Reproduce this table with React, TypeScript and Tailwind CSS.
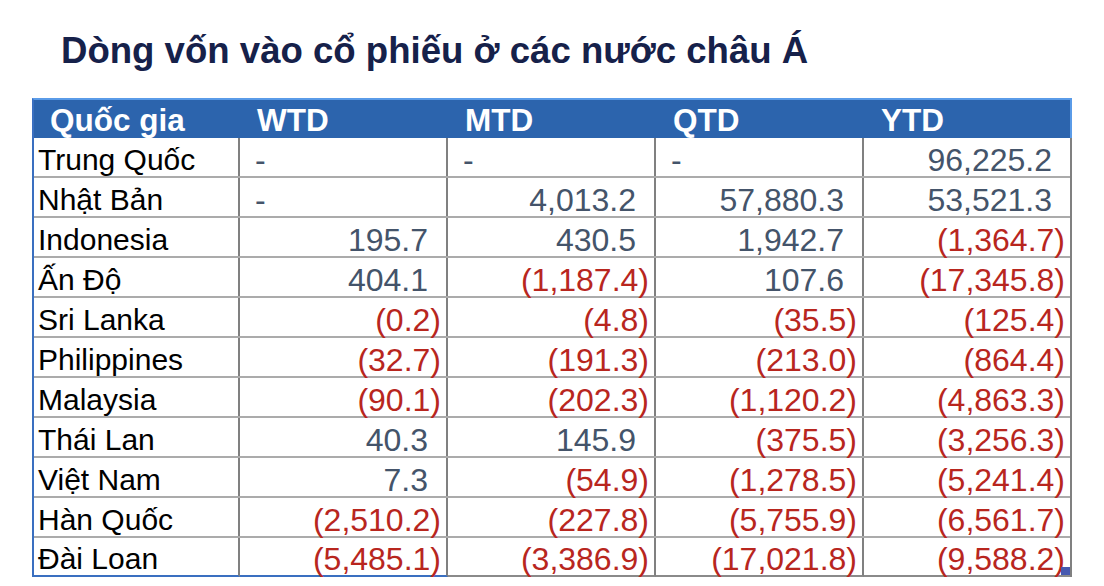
import React from "react";

type Row = { name: string; vals: (number | null)[] };

const rows: Row[] = [
  { name: "Trung Quốc", vals: [null, null, null, 96225.2] },
  { name: "Nhật Bản", vals: [null, 4013.2, 57880.3, 53521.3] },
  { name: "Indonesia", vals: [195.7, 430.5, 1942.7, -1364.7] },
  { name: "Ấn Độ", vals: [404.1, -1187.4, 107.6, -17345.8] },
  { name: "Sri Lanka", vals: [-0.2, -4.8, -35.5, -125.4] },
  { name: "Philippines", vals: [-32.7, -191.3, -213.0, -864.4] },
  { name: "Malaysia", vals: [-90.1, -202.3, -1120.2, -4863.3] },
  { name: "Thái Lan", vals: [40.3, 145.9, -375.5, -3256.3] },
  { name: "Việt Nam", vals: [7.3, -54.9, -1278.5, -5241.4] },
  { name: "Hàn Quốc", vals: [-2510.2, -227.8, -5755.9, -6561.7] },
  { name: "Đài Loan", vals: [-5485.1, -3386.9, -17021.8, -9588.2] },
];

const fmt = (n: number) =>
  Math.abs(n).toLocaleString("en-US", { minimumFractionDigits: 1, maximumFractionDigits: 1 });

const headers = ["WTD", "MTD", "QTD", "YTD"];

export default function App() {
  const font = { fontFamily: '"Liberation Sans", Arial, sans-serif' };
  return (
    <div className="w-[1104px] h-[586px] bg-white overflow-hidden" style={font}>
      <h1 className="pl-[61px] pt-[27px] h-[98px] text-[36.6px] leading-[48px] font-bold text-[#16214a]">
        Dòng vốn vào cổ phiếu ở các nước châu Á
      </h1>
      <div className="ml-[32px] w-[1040px]">
        <div className="grid grid-cols-[206px_208px_208px_208px_206px] h-[40px] bg-[#2c64ad] border-t-2 border-t-[#5a9be8] border-r-2 border-r-[#5a9be8] border-l-2 border-l-[#3a6fc0] text-white font-bold text-[31.5px] leading-[34px]">
          <div className="flex items-center pl-[16px] pt-[2px]">Quốc gia</div>
          {headers.map((h) => (
            <div key={h} className="flex items-center pl-[17px] pt-[2px]">
              {h}
            </div>
          ))}
        </div>
        <div className="border-l-2 border-l-[#3a6fc0] border-r-2 border-r-[#808080] text-[32px] leading-[32px]">
          {rows.map((r, ri) => {
            const last = ri === rows.length - 1;
            return (
              <div
                key={r.name}
                className={
                  last
                    ? "grid grid-cols-[206px_208px_208px_208px_206px] h-[39px]"
                    : "grid grid-cols-[206px_208px_208px_208px_206px] h-[40px] border-b-2 border-b-[#ababab]"
                }
              >
                <div
                  className={
                    "flex items-center pl-[4px] pt-[5px] text-black text-[30px] border-r-2 border-r-[#808080]" +
                    (last ? " border-b-2 border-b-[#3a6fc0]" : "")
                  }
                >
                  {r.name}
                </div>
                {r.vals.map((v, ci) => {
                  const isLast = ci === 3;
                  let border = isLast ? "" : " border-r-2 border-r-[#808080]";
                  if (last) border += ci === 0 ? " border-b-2 border-b-[#3a6fc0]" : " border-b-2 border-b-[#8a8a8a]";
                  if (v === null) {
                    return (
                      <div key={ci} className={"flex items-center pl-[15px] pt-[5px] text-[#44546a]" + border}>
                        -
                      </div>
                    );
                  }
                  if (v < 0) {
                    return (
                      <div
                        key={ci}
                        className={"relative flex items-center justify-end pr-[5px] pt-[5px] text-[#b8261e]" + border}
                      >
                        ({fmt(v)})
                        {last && isLast && (
                          <span className="absolute right-0 bottom-0 w-[9px] h-[8px] bg-[#4659b0]" />
                        )}
                      </div>
                    );
                  }
                  return (
                    <div
                      key={ci}
                      className={"flex items-center justify-end pr-[18px] pt-[5px] text-[#44546a]" + border}
                    >
                      {fmt(v)}
                    </div>
                  );
                })}
              </div>
            );
          })}
        </div>
      </div>
    </div>
  );
}
